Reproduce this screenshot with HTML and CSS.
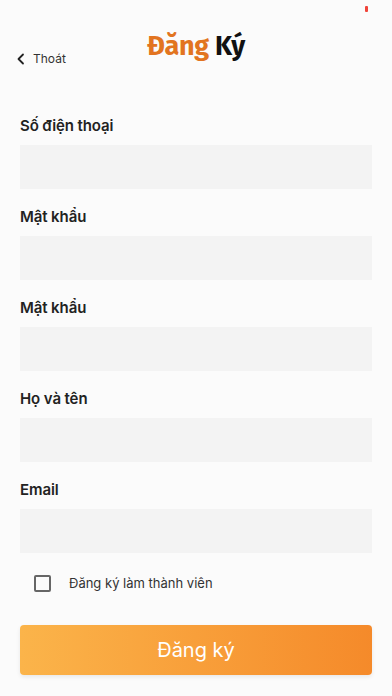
FILE: index.html
```html
<!DOCTYPE html>
<html lang="vi">
<head>
  <meta charset="UTF-8">
  <meta name="viewport" content="width=device-width, initial-scale=1.0">
  <title>Đăng Ký</title>
  <link rel="stylesheet" href="styles.css">
</head>
<body>
  <div class="status-bar">
    <span class="status-dot"></span>
  </div>

  <div class="header">
    <a class="back" href="#">
      <svg width="10" height="12" viewBox="0 0 10 12"><path d="M7 1.5L2.5 6L7 10.5" fill="none" stroke="#222" stroke-width="1.8" stroke-linecap="round" stroke-linejoin="round"/></svg>
      <span>Thoát</span>
    </a>
    <h1><span class="accent">Đăng</span> Ký</h1>
  </div>

  <form class="form">
    <div class="section">
      <label for="phone">Số điện thoại</label>
      <input type="text" id="phone" name="phone">
    </div>
    <div class="section">
      <label for="password">Mật khẩu</label>
      <input type="password" id="password" name="password">
    </div>
    <div class="section">
      <label for="password2">Mật khẩu</label>
      <input type="password" id="password2" name="password2">
    </div>
    <div class="section">
      <label for="fullname">Họ và tên</label>
      <input type="text" id="fullname" name="fullname">
    </div>
    <div class="section">
      <label for="email">Email</label>
      <input type="text" id="email" name="email">
    </div>

    <label class="member">
      <span class="box"></span>
      <span>Đăng ký làm thành viên</span>
    </label>

    <button type="submit">Đăng ký</button>
  </form>
</body>
</html>
```

FILE: styles.css
```css
* {
  box-sizing: border-box;
}

body {
  margin: 0;
  font-family: Inter, "Noto Sans", sans-serif;
  background-color: #fbfbfb;
  color: #222;
  width: 392px;
  height: 696px;
  overflow: hidden;
}

.status-bar {
  height: 28px;
  position: relative;
}

.status-dot {
  position: absolute;
  left: 365px;
  top: 6px;
  width: 3px;
  height: 6px;
  border-radius: 1px;
  background: #f0443a;
}

.header {
  height: 64px;
  padding-top: 1px;
  display: flex;
  justify-content: center;
  position: relative;
}

.back {
  position: absolute;
  left: 16px;
  top: 23px;
  display: flex;
  align-items: center;
  gap: 7px;
  text-decoration: none;
  color: #333;
  font-size: 12px;
}

h1 {
  margin: 0;
  height: 34px;
  line-height: 34px;
  font-family: "Fira Sans", "Noto Sans", sans-serif;
  font-size: 27px;
  font-weight: 700;
  color: #111;
  letter-spacing: -0.3px;
}

.accent {
  color: #e27420;
}

.form {
  padding: 24px 20px 0;
}

.section {
  display: flex;
  flex-direction: column;
  margin-bottom: 18px;
}

label {
  font-size: 15px;
  font-weight: 600;
  color: #222;
  height: 20px;
  line-height: 20px;
  letter-spacing: -0.1px;
}

input[type="text"], input[type="password"] {
  margin-top: 9px;
  height: 44px;
  width: 100%;
  border: none;
  background: #f3f3f3;
  outline: none;
}

.member {
  display: flex;
  align-items: center;
  gap: 18px;
  margin-top: 4px;
  padding-left: 14px;
  height: 24px;
  font-size: 13px;
  font-weight: 400;
  color: #333;
  letter-spacing: 0;
}

.box {
  width: 17px;
  height: 17px;
  border: 2px solid #666;
  border-radius: 2px;
}

button {
  margin-top: 30px;
  width: 100%;
  height: 50px;
  border: none;
  border-radius: 4px;
  background: linear-gradient(90deg, #fbb44a, #f58a2a);
  box-shadow: 0 2px 4px rgba(0, 0, 0, 0.08);
  color: #fff;
  font-family: Inter, "Noto Sans", sans-serif;
  font-size: 20px;
  font-weight: 400;
}
```
